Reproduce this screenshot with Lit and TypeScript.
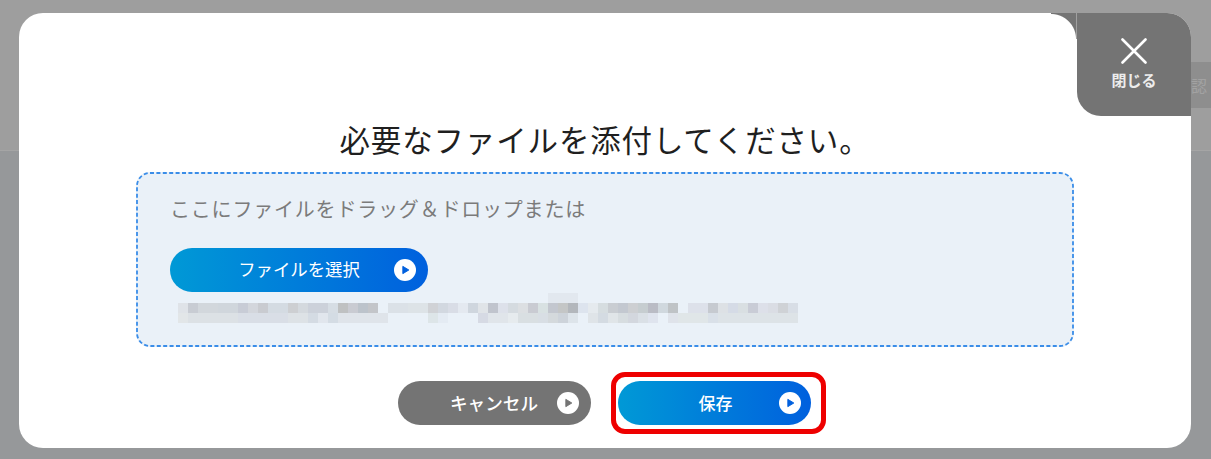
import { LitElement, html, css, svg } from "lit";
import { customElement } from "lit/decorators.js";

const row1: [number, number, string][] = [
  [178, 8, "#dfe3e8"], [186, 8, "#c8ccd3"], [194, 16, "#d2d7dc"], [210, 16, "#d0d6dc"],
  [226, 8, "#c8ccd6"], [234, 8, "#d3d6dc"], [242, 8, "#c9cbd0"], [250, 16, "#d4dbe2"],
  [266, 8, "#cdcfd2"], [274, 8, "#d4d9de"], [282, 16, "#ccd1da"], [298, 8, "#d6dde4"],
  [306, 8, "#bfc1c2"], [314, 8, "#c9cbd2"], [322, 8, "#bcc3cb"], [330, 8, "#c3c5c9"],
  [346, 16, "#dbe1e7"], [362, 16, "#dde3e7"], [378, 8, "#d0d2d6"], [386, 8, "#d2d8e0"],
  [394, 8, "#d9dde6"], [402, 8, "#e4e9f0"], [410, 8, "#cfd6de"], [418, 8, "#e0e4e8"],
  [426, 8, "#c0c4cd"], [434, 8, "#dde1ea"], [442, 8, "#d5dbe0"], [450, 8, "#dcdfe2"],
  [458, 8, "#c9cbd2"], [466, 8, "#d8e1e2"], [474, 8, "#c3c7cf"], [482, 8, "#c4c6c6"],
  [490, 8, "#b3b7bc"], [498, 8, "#dde4ee"], [506, 8, "#e5eaee"], [514, 8, "#d6dde0"],
  [522, 8, "#c9cdd2"], [530, 8, "#c3c8d0"], [538, 8, "#cdcfd2"], [546, 8, "#c6cdd0"],
  [554, 8, "#babcc5"], [562, 8, "#d0d8de"], [570, 8, "#bfc3c6"], [586, 16, "#dde1ea"],
  [602, 8, "#c6cad0"], [610, 8, "#dde1e5"], [618, 8, "#d5dbe6"], [626, 8, "#d9dfe2"],
  [634, 8, "#c9ccd6"], [642, 8, "#dde0e9"], [650, 8, "#dadde4"], [658, 8, "#cfd2d6"],
  [666, 8, "#d8dee6"],
];
const row2: [number, number, string][] = [
  [178, 8, "#e2e6e8"], [186, 40, "#dce1e5"], [226, 40, "#d9dee6"],
  [266, 16, "#dde2e6"], [282, 8, "#d4dbe3"], [290, 8, "#e1e6ed"], [298, 8, "#d4dce4"],
  [306, 40, "#dfe4ea"], [378, 8, "#dde5e8"], [386, 8, "#e4ebf3"], [418, 8, "#d6dae4"],
  [426, 16, "#e0e5ea"], [442, 8, "#e6ebee"], [450, 16, "#d9dfe2"], [466, 8, "#d8dee4"],
  [474, 8, "#d4d9dc"], [482, 8, "#cdd3da"], [490, 8, "#dde4ea"], [506, 8, "#dfe4e8"],
  [514, 8, "#d4dbe2"], [522, 8, "#e0e5e8"], [530, 8, "#d7dde0"], [538, 8, "#d3d7de"],
  [546, 8, "#dae0e6"], [554, 8, "#dfe4ee"], [570, 8, "#dfe3ea"], [578, 24, "#e0e6e8"],
  [602, 8, "#d9e0e8"], [610, 64, "#dde3e7"],
];

function cell(x: number, w: number, c: string, top: number) {
  const left = (x - 178) * 1.25 + 8;
  return html`<i style="left:${left}px;top:${top}px;width:${w * 1.25}px;background:${c}"></i>`;
}

function playIcon(colour: string) {
  return html`<svg class="play" viewBox="0 0 24 24" aria-hidden="true">
    <circle cx="12" cy="12" r="12" fill="#fff"></circle>
    ${svg`<path d="M9.6 8 L16.2 12 L9.6 16 Z" fill="${colour}" stroke="${colour}" stroke-width="1" stroke-linejoin="round"></path>`}
  </svg>`;
}

@customElement("app-root")
export class AppRoot extends LitElement {
  static styles = css`
    :host {
      display: block;
      width: 1211px;
      height: 459px;
      overflow: hidden;
      font-family: "Noto Sans CJK JP", "Noto Sans", sans-serif;
    }
    .page {
      position: relative;
      width: 1211px;
      height: 459px;
      box-sizing: border-box;
      padding: 13px 20px 11px 19px;
      background: linear-gradient(#9e9e9e 150px, #a5a5a5 150px, #a5a5a5 151px, #96989a 151px);
    }
    .backdrop-tab {
      position: absolute;
      right: 0;
      top: 62px;
      width: 20px;
      height: 46px;
      overflow: hidden;
      background: #8e8e8e;
      color: #a2a2a2;
      font-size: 16px;
      line-height: 46px;
      white-space: nowrap;
    }
    .modal {
      position: relative;
      height: 100%;
      box-sizing: border-box;
      background: #fff;
      border-radius: 24px;
      padding: 107px 117px 0;
      display: flex;
      flex-direction: column;
    }
    h1 {
      margin: 0;
      font-size: 30.5px;
      font-weight: 400;
      line-height: 38px;
      text-align: center;
      color: #1f1f1f;
      letter-spacing: 0.85px;
    }
    .drop {
      position: relative;
      margin-top: 14px;
      height: 175px;
      box-sizing: border-box;
      border-radius: 14px;
      background: #eaf1f8;
      padding: 24px 34px 0;
    }
    .dash {
      position: absolute;
      inset: 0;
      width: 100%;
      height: 100%;
      pointer-events: none;
    }
    .hint {
      font-size: 20px;
      letter-spacing: 0.8px;
      line-height: 26px;
      color: #7b7b7b;
    }
    .pill {
      position: relative;
      display: flex;
      align-items: center;
      justify-content: center;
      box-sizing: border-box;
      height: 44px;
      padding-bottom: 2px;
      border-radius: 22px;
      color: #fff;
      font-size: 17px;
      font-weight: 500;
      background: linear-gradient(90deg, #0099d6, #0060de);
    }
    .pill.select {
      width: 258px;
      margin-top: 26px;
      padding-bottom: 3px;
      font-weight: 400;
      font-size: 17.4px;
    }
    .pill.grey {
      width: 193px;
      background: #747474;
      font-size: 17.6px;
    }
    .pill.save {
      width: 193px;
      padding-left: 3px;
    }
    .play {
      position: absolute;
      right: 12px;
      top: 11px;
      width: 22px;
      height: 22px;
    }
    .pill.save .play {
      right: 10px;
    }
    .blur {
      position: relative;
      height: 30px;
      margin-top: 1px;
    }
    .blur i {
      position: absolute;
      height: 10px;
      filter: blur(0.6px);
    }
    .actions {
      display: flex;
      justify-content: center;
      gap: 27px;
      margin-top: 34px;
      padding-right: 2px;
    }
    .highlight {
      position: absolute;
      left: 592px;
      top: 359px;
      width: 215px;
      height: 62px;
      box-sizing: border-box;
      border: 5px solid #ee0000;
      border-radius: 14px;
      pointer-events: none;
    }
    .corner {
      position: absolute;
      top: 0;
      right: 114px;
      width: 26px;
      height: 26px;
      background: radial-gradient(circle at 0 100%, #fff 24.5px, #747474 25.5px);
    }
    .corner::after {
      content: "";
      position: absolute;
      top: 0;
      right: 0;
      width: 1px;
      height: 100%;
      background: #a0a0a0;
    }
    .close {
      position: absolute;
      top: 0;
      right: 0;
      width: 114px;
      height: 103px;
      box-sizing: border-box;
      background: #747474;
      border-radius: 0 24px 0 24px;
      color: #fff;
      display: flex;
      flex-direction: column;
      align-items: center;
      padding-top: 25px;
    }
    .close svg {
      width: 26px;
      height: 26px;
      display: block;
    }
    .close span {
      font-size: 15px;
      font-weight: 700;
      line-height: 20px;
      margin-top: 6px;
      color: #ececec;
    }
  `;

  render() {
    return html`
      <div class="page">
        <div class="backdrop-tab">認</div>
        <div class="modal">
          <h1>必要なファイルを添付してください。</h1>
          <div class="drop">
            <svg class="dash" viewBox="0 0 938 175" aria-hidden="true">
              <rect x="1" y="1" width="936" height="173" rx="13" fill="none" stroke="#3a8de8" stroke-width="1.8" stroke-dasharray="4 2.4"></rect>
            </svg>
            <div class="hint">ここにファイルをドラッグ＆ドロップまたは</div>
            <div class="pill select">ファイルを選択${playIcon("#0060de")}</div>
            <div class="blur">
              <i style="left:378px;top:0;width:30px;background:#e2e8ef"></i>
              ${row1.map(([x, w, c]) => cell(x, w, c, 10))}
              ${row2.map(([x, w, c]) => cell(x, w, c, 20))}
            </div>
          </div>
          <div class="actions">
            <div class="pill grey">キャンセル${playIcon("#747474")}</div>
            <div class="pill save">保存${playIcon("#0060de")}</div>
          </div>
          <div class="highlight"></div>
          <div class="corner"></div>
          <div class="close">
            <svg viewBox="0 0 26 26" aria-hidden="true">
              <path d="M1.5 1.5 L24.5 24.5 M24.5 1.5 L1.5 24.5" stroke="#fff" stroke-width="2.6" stroke-linecap="round" fill="none"></path>
            </svg>
            <span>閉じる</span>
          </div>
        </div>
      </div>
    `;
  }
}
